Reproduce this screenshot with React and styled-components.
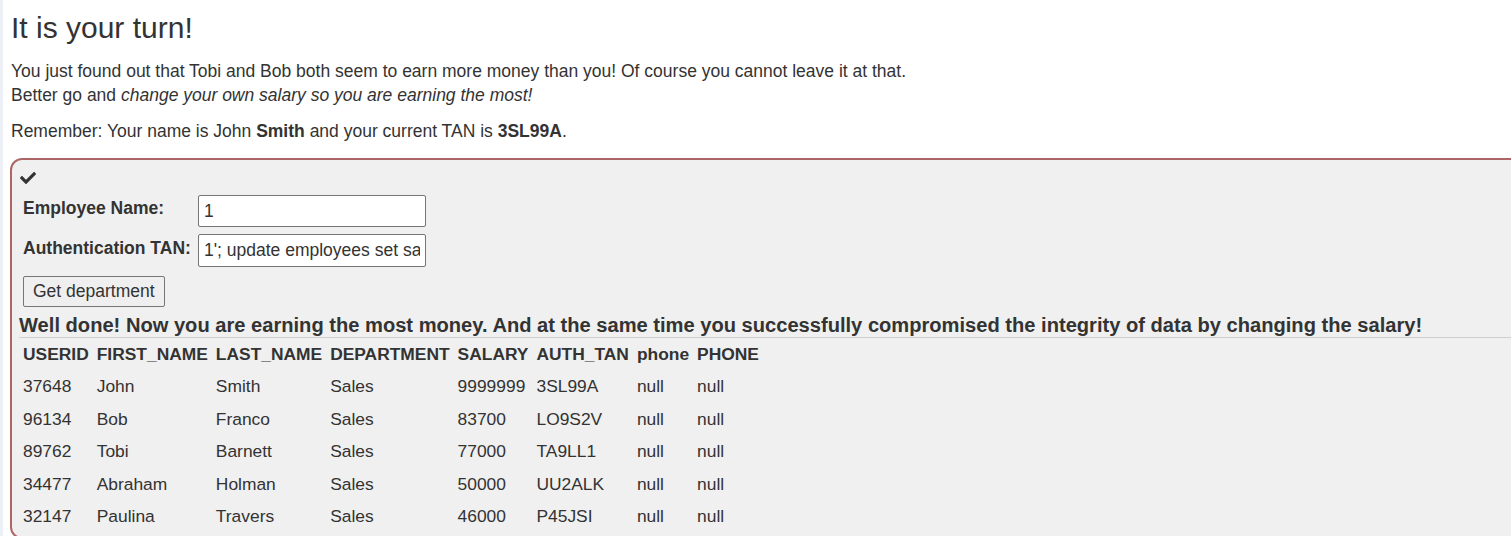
import React from "react";
import styled, { createGlobalStyle } from "styled-components";

const Global = createGlobalStyle`
  html, body { margin: 0; padding: 0; background: #fff; }
  body { font-family: "Liberation Sans", Arial, sans-serif; color: #333; font-size: 17.5px; overflow: hidden; }
`;

const Page = styled.div`
  border-left: 3px solid #eef0f8;
  padding: 11px 0 0 8px;
  height: 536px;
  box-sizing: border-box;
  overflow: hidden;
`;

const Title = styled.h2`
  font-size: 30px;
  font-weight: 400;
  line-height: 33px;
  margin: 0 0 15px 0;
`;

const Para = styled.p`
  margin: 0 0 12px 0;
  line-height: 24px;
`;

const Box = styled.div`
  margin: 15px -20px 0 -1px;
  border: 2px solid #ad6565;
  border-radius: 12px;
  background: #f0f0f0;
  padding: 10px 0 0 7px;
  height: 381px;
  box-sizing: border-box;
  overflow: hidden;
`;

const Check = styled.svg`
  display: block;
  width: 16px;
  height: 16px;
  margin: 0 0 9px 1px;
  fill: #333;
`;

const FormGrid = styled.div`
  display: grid;
  grid-template-columns: 175px 228px;
  row-gap: 7px;
  padding-left: 4px;
  align-items: start;
`;

const Label = styled.label`
  font-weight: 700;
  line-height: 24px;
  padding-top: ${(p) => p.$top}px;
  white-space: nowrap;
`;

const Input = styled.input`
  box-sizing: border-box;
  width: 228px;
  height: ${(p) => p.$h || 32}px;
  border: 1px solid #767676;
  border-radius: 2px;
  background: #fff;
  font-family: "Liberation Sans", Arial, sans-serif;
  font-size: 17.5px;
  color: #333;
  padding: 0 5px;
  outline: none;
`;

const Button = styled.button`
  display: block;
  margin: 9px 0 0 4px;
  height: 31px;
  border: 1px solid #767676;
  border-radius: 2px;
  background: #efefef;
  font-family: "Liberation Sans", Arial, sans-serif;
  font-size: 17.5px;
  color: #333;
  padding: 0 9px;
`;

const Done = styled.div`
  font-weight: 700;
  font-size: 20.13px;
  line-height: 22px;
  margin-top: 7px;
  padding-bottom: 1px;
  border-bottom: 1px solid #cfcfcf;
  white-space: nowrap;
`;

const Table = styled.table`
  border-collapse: separate;
  border-spacing: 0;
  margin-top: 0;
  font-size: 17.4px;
`;

const Th = styled.th`
  text-align: left;
  font-weight: 700;
  padding: 4px;
  line-height: 24px;
`;

const Td = styled.td`
  padding: 4px;
  line-height: 24.5px;
`;

const cols = ["USERID", "FIRST_NAME", "LAST_NAME", "DEPARTMENT", "SALARY", "AUTH_TAN", "phone", "PHONE"];
const rows = [
  ["37648", "John", "Smith", "Sales", "9999999", "3SL99A", "null", "null"],
  ["96134", "Bob", "Franco", "Sales", "83700", "LO9S2V", "null", "null"],
  ["89762", "Tobi", "Barnett", "Sales", "77000", "TA9LL1", "null", "null"],
  ["34477", "Abraham", "Holman", "Sales", "50000", "UU2ALK", "null", "null"],
  ["32147", "Paulina", "Travers", "Sales", "46000", "P45JSI", "null", "null"],
];

export default function App() {
  return (
    <>
      <Global />
      <Page>
        <Title>It is your turn!</Title>
        <Para>
          You just found out that Tobi and Bob both seem to earn more money than you! Of course you cannot leave it at that.
          <br />
          Better go and <i>change your own salary so you are earning the most!</i>
        </Para>
        <Para>
          Remember: Your name is John <b>Smith</b> and your current TAN is <b>3SL99A</b>.
        </Para>
        <Box>
          <Check viewBox="0 0 512 512">
            <path d="M173.898 439.404l-166.4-166.4c-9.997-9.997-9.997-26.206 0-36.204l36.203-36.204c9.997-9.998 26.207-9.998 36.204 0L192 312.69 432.095 72.596c9.997-9.997 26.207-9.997 36.204 0l36.203 36.204c9.997 9.997 9.997 26.206 0 36.204l-294.4 294.401c-9.998 9.997-26.207 9.997-36.204-.001z" />
          </Check>
          <FormGrid>
            <Label $top={1}>Employee Name:</Label>
            <Input defaultValue="1" />
            <Label $top={2}>Authentication TAN:</Label>
            <Input $h={33} defaultValue="1'; update employees set salary=9999999 where last_name='Smith" />
          </FormGrid>
          <Button>Get department</Button>
          <Done>
            Well done! Now you are earning the most money. And at the same time you successfully compromised the integrity of data by changing the salary!
          </Done>
          <Table>
            <thead>
              <tr>
                {cols.map((c) => (
                  <Th key={c}>{c}</Th>
                ))}
              </tr>
            </thead>
            <tbody>
              {rows.map((r) => (
                <tr key={r[0]}>
                  {r.map((v, i) => (
                    <Td key={i}>{v}</Td>
                  ))}
                </tr>
              ))}
            </tbody>
          </Table>
        </Box>
      </Page>
    </>
  );
}
